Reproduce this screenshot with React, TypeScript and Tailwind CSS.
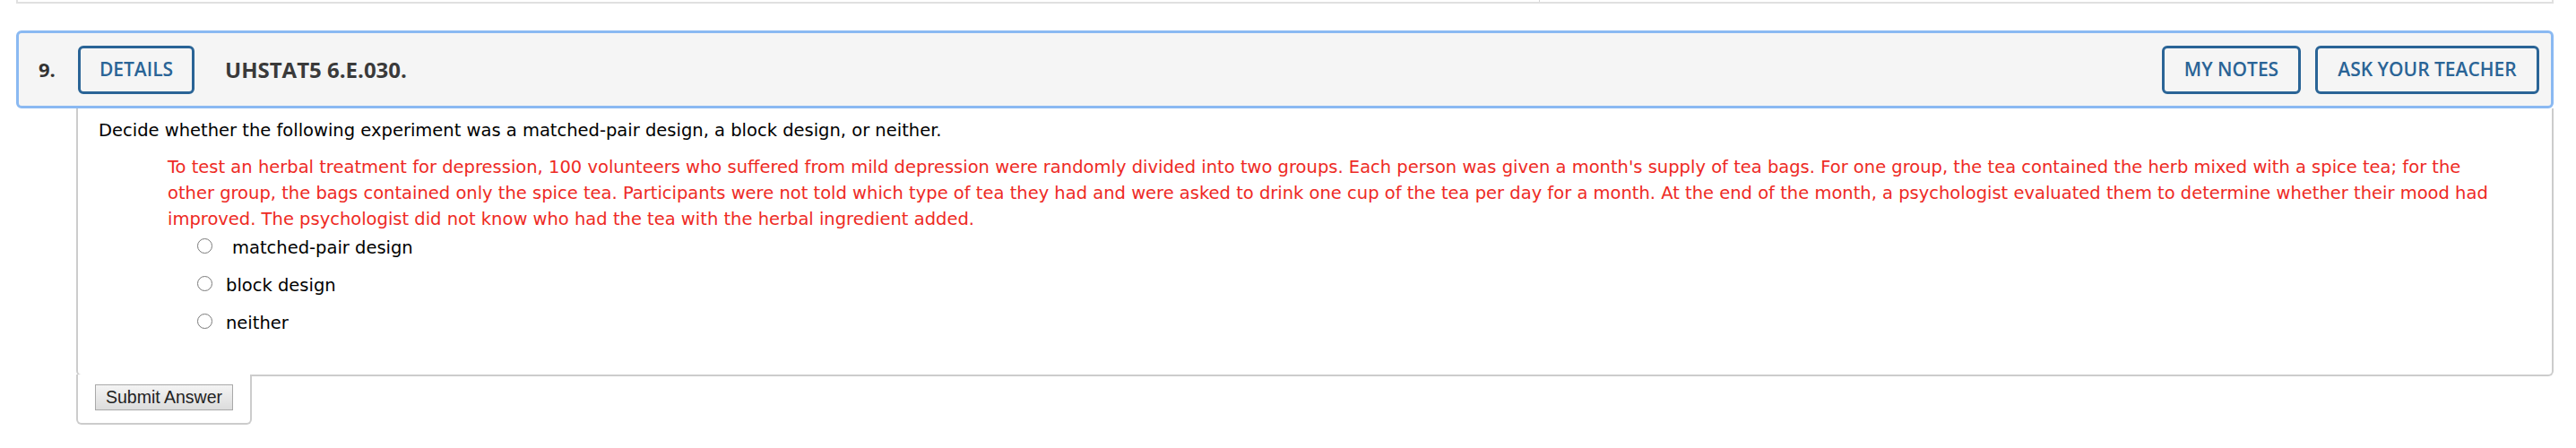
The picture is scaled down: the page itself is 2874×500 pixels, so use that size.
import React from 'react';

const options = ['matched-pair design', 'block design', 'neither'];

const HeaderButton: React.FC<{ label: string; className?: string }> = ({ label, className = '' }) => (
    <button
        className={`h-[54px] rounded-[6px] border-[3px] border-[#2a6496] bg-transparent text-[21px] font-semibold text-[#2a6496] ${className}`}
        style={{ fontFamily: '"Open Sans", sans-serif' }}
    >
        {label}
    </button>
);

const App: React.FC = () => {
    return (
        <div className="h-[500px] w-[2874px] bg-white" style={{ fontFamily: '"DejaVu Sans", Verdana, sans-serif' }}>
            {/* bottom edge of the previous question */}
            <div className="ml-[18px] flex h-[4px] w-[2831px] border-x-2 border-b-2 border-[#e0e0e0]">
                <div className="h-full w-[1698px] border-r border-[#d6d6d6]" />
            </div>

            {/* question header */}
            <div
                className="ml-[18px] mt-[30px] flex h-[87px] w-[2831px] items-center rounded-[6px] border-[3px] border-[#8ab9f2] bg-[#f5f5f5] pl-[22px] pr-[13px]"
                style={{ fontFamily: '"Open Sans", sans-serif' }}
            >
                <span className="w-[44px] text-[22px] font-bold text-[#333]">9.</span>
                <HeaderButton label="DETAILS" className="w-[130px]" />
                <span className="ml-[34px] text-[24px] font-bold text-[#3a3a3a]">UHSTAT5 6.E.030.</span>
                <div className="ml-auto flex gap-[16px]">
                    <HeaderButton label="MY NOTES" className="w-[155px]" />
                    <HeaderButton label="ASK YOUR TEACHER" className="w-[250px]" />
                </div>
            </div>

            {/* question body */}
            <div className="ml-[85px] w-[2764px]">
                <div className="rounded-b-[6px] border-x-2 border-b-2 border-[#cccccc] pb-[43px] pl-[23px] pt-[10px] text-[19.5px] leading-[29px]">
                    <p className="text-black">
                        Decide whether the following experiment was a matched-pair design, a block design, or neither.
                    </p>
                    <p className="ml-[77px] mr-[45px] mt-[12px] text-[#ee2a24]">
                        To test an herbal treatment for depression, 100 volunteers who suffered from mild depression were randomly divided into two groups. Each person was given a month's supply of tea bags. For one group, the tea contained the herb mixed with a spice tea; for the other group, the bags contained only the spice tea. Participants were not told which type of tea they had and were asked to drink one cup of the tea per day for a month. At the end of the month, a psychologist evaluated them to determine whether their mood had improved. The psychologist did not know who had the tea with the herbal ingredient added.
                    </p>
                    <div className="ml-[110px] mt-[3px] flex flex-col gap-[13px]">
                        {options.map((opt, i) => (
                            <label key={opt} className="flex items-center text-black">
                                <span className="mb-[4px] inline-block h-[17px] w-[17px] rounded-full border-[1.5px] border-[#7a7a7a] bg-white" />
                                <span className={i === 0 ? 'ml-[22px]' : 'ml-[15px]'}>{opt}</span>
                            </label>
                        ))}
                    </div>
                </div>
                <div className="relative -mt-[2px] h-[56px] w-[196px] rounded-b-[6px] border-x-2 border-b-2 border-[#cccccc] bg-white pl-[19px] pt-[11px]">
                    <button
                        className="h-[29px] w-[154px] border border-[#a9a9a9] bg-gradient-to-b from-[#f4f4f4] to-[#dcdcdc] text-[19.5px] leading-none text-[#222]"
                        style={{ fontFamily: '"Liberation Sans", Arial, sans-serif' }}
                    >
                        Submit Answer
                    </button>
                </div>
            </div>
        </div>
    );
};

export default App;
